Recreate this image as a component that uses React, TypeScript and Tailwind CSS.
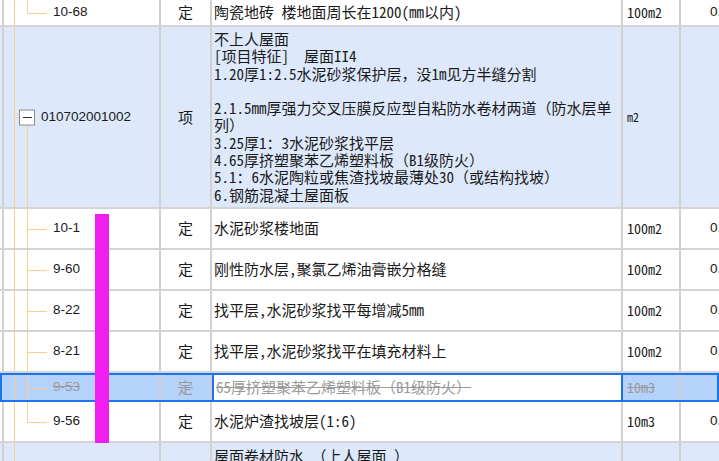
import type { ReactNode } from "react";

type Tree = "first" | "parent" | "child" | "lastChild" | "none";

const cjk = "font-['Noto_Sans_Mono_CJK_SC','Noto_Sans_CJK_SC',sans-serif]";
const latin = "font-['Liberation_Sans',Arial,sans-serif]";
const orange = "#f9cf96";

function TreeLines({ kind, h }: { kind: Tree; h: number }) {
  const c = Math.round(h / 2) + 0.5;
  return (
    <svg className="absolute inset-0" width={157} height={h}>
      <line x1={10.5} y1={0} x2={10.5} y2={h} stroke={orange} />
      {kind === "parent" && (
        <>
          <line x1={10.5} y1={c} x2={15} y2={c} stroke={orange} />
          <line x1={23.5} y1={c + 8} x2={23.5} y2={h} stroke={orange} />
          <rect x={15.5} y={c - 7.5} width={15} height={15} fill="#fff" stroke="#8c8c8c" />
          <line x1={19} y1={c} x2={28} y2={c} stroke="#333" />
        </>
      )}
      {(kind === "child" || kind === "first" || kind === "lastChild") && (
        <>
          <line x1={23.5} y1={0} x2={23.5} y2={kind === "child" ? h : c} stroke={orange} />
          <line x1={23.5} y1={c} x2={43} y2={c} stroke={orange} />
        </>
      )}
    </svg>
  );
}

type RowProps = {
  h: number;
  tree: Tree;
  code?: string;
  kind?: string;
  name?: ReactNode;
  unit?: ReactNode;
  qty?: string;
  blue?: boolean;
  top?: boolean;
  selected?: boolean;
};

function Row({ h, tree, code, kind, name, unit, qty, blue, top, selected }: RowProps) {
  const bg = selected ? "bg-[#b5d3fa]" : blue ? "bg-[#dde9fb]" : "bg-white";
  const line = selected ? "" : "border-b-2 border-[#d4d4d4]";
  const muted = selected ? "text-[#9a9a9a] line-through" : "text-[#1a1a1a]";
  return (
    <div
      className={`flex shrink-0 ${bg} ${line} ${selected ? "border-2 border-[#1a74f0]" : ""}`}
      style={{ height: h }}
    >
      <div className={`${selected ? "w-[2px]" : "w-[4px] border-r-2 border-[#d0d0d0]"} shrink-0`} />
      <div className="relative w-[157px] shrink-0 border-r-2 border-[#d0d0d0] flex items-center">
        <TreeLines kind={tree} h={selected ? h - 4 : h - 2} />
        {code && (
          <span
            className={`relative ${latin} text-[13.5px] ${muted} ${
              tree === "parent" ? "pl-[37px]" : "pl-[49px]"
            }`}
          >
            {code}
          </span>
        )}
      </div>
      <div className={`w-[51px] shrink-0 border-r-2 border-[#d0d0d0] flex items-center justify-center ${cjk} text-[15px] ${muted}`}>
        {kind}
      </div>
      <div
        className={`w-[411px] shrink-0 flex ${top ? "items-start" : "items-center"} pl-[2px] ${cjk} text-[15px] ${muted} ${
          selected ? "bg-white border-x-2 border-[#1a74f0]" : "border-r-2 border-[#d0d0d0]"
        }`}
      >
        {name}
      </div>
      <div className={`w-[58px] shrink-0 border-r-2 border-[#d0d0d0] flex items-center pl-[4px] ${cjk} text-[14px] ${muted}`}>
        {unit}
      </div>
      <div className={`flex-1 flex items-center pl-[29px] overflow-hidden whitespace-nowrap ${latin} text-[13.5px] text-[#1a1a1a]`}>
        {qty}
      </div>
    </div>
  );
}

const featureLines = [
  "不上人屋面",
  "[项目特征]  屋面II4",
  "1.20厚1:2.5水泥砂浆保护层，没1m见方半缝分割",
  " ",
  "2.1.5mm厚强力交叉压膜反应型自粘防水卷材两道（防水层单",
  "列）",
  "3.25厚1：3水泥砂浆找平层",
  "4.65厚挤塑聚苯乙烯塑料板（B1级防火）",
  "5.1：6水泥陶粒或焦渣找坡最薄处30（或结构找坡）",
  "6.钢筋混凝土屋面板",
];

export default function App() {
  return (
    <div className="relative w-[719px] h-[461px] overflow-hidden bg-white flex flex-col">
      <Row
        h={27}
        tree="first"
        code="10-68"
        kind="定"
        name="陶瓷地砖 楼地面周长在1200(mm以内)"
        unit="100m2"
        qty="0.1"
      />
      <Row
        h={182}
        tree="parent"
        code="010702001002"
        kind="项"
        blue
        top
        unit={<span className="text-[12px]">m2</span>}
        name={
          <div className="pt-[3px] leading-[17.3px] whitespace-pre">
            {featureLines.map((l, i) => (
              <div key={i}>{l}</div>
            ))}
          </div>
        }
      />
      <Row h={41} tree="child" code="10-1" kind="定" name="水泥砂浆楼地面" unit="100m2" qty="0.1" />
      <Row h={41} tree="child" code="9-60" kind="定" name="刚性防水层,聚氯乙烯油膏嵌分格缝" unit="100m2" qty="0.1" />
      <Row h={41} tree="child" code="8-22" kind="定" name="找平层,水泥砂浆找平每增减5mm" unit="100m2" qty="0.1" />
      <Row h={41} tree="child" code="8-21" kind="定" name="找平层,水泥砂浆找平在填充材料上" unit="100m2" qty="0.1" />
      <Row
        h={29}
        tree="child"
        code="9-53"
        kind="定"
        selected
        name="65厚挤塑聚苯乙烯塑料板（B1级防火）"
        unit="10m3"
      />
      <Row h={41} tree="lastChild" code="9-56" kind="定" name="水泥炉渣找坡层(1:6)" unit="10m3" qty="0.1" />
      <Row h={40} tree="none" blue top name={<div className="pt-[2px] whitespace-pre">屋面卷材防水 （上人屋面 ）</div>} />

      {/* annotation marker */}
      <div className="absolute left-[95px] top-[214px] w-[14px] h-[229px] bg-[#f01ef0]" />
    </div>
  );
}
